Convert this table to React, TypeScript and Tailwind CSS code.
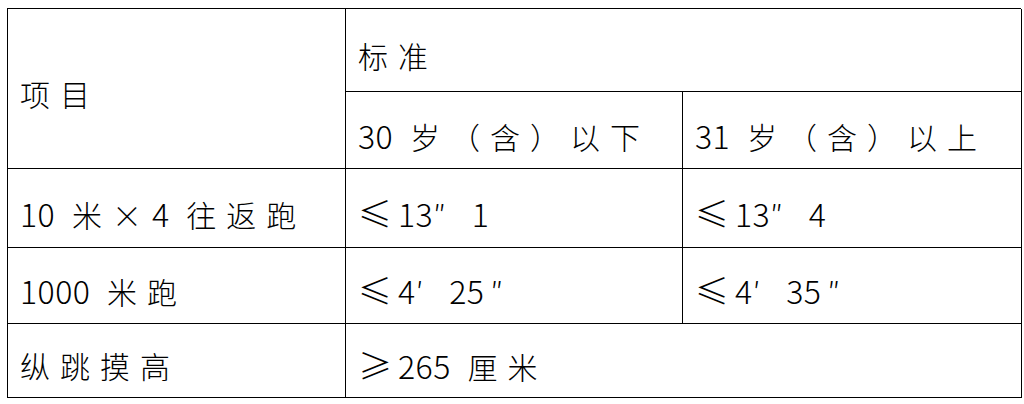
import type { ReactNode } from "react";

// CJK run: spaced on a wide character grid, like the Word table it comes from
function C({ children }: { children: ReactNode }) {
  return <span className="text-[30px] tracking-[10px]">{children}</span>;
}

// digits and primes
function L({ children }: { children: ReactNode }) {
  return <span className="text-[32px] tracking-[0.5px]">{children}</span>;
}

// ≤ / ≥
function M({ children }: { children: ReactNode }) {
  return <span className="mr-[6px] text-[34px]">{children}</span>;
}

function Cell({ className = "", children }: { className?: string; children: ReactNode }) {
  return (
    <div
      className={`flex items-center whitespace-pre border-r border-b border-black pt-[9px] pl-[12px] leading-none text-black ${className}`}
    >
      <span>{children}</span>
    </div>
  );
}

// e.g. ⩽13″ 1 — the prime sits on a full-width cell before the tenth digit
function Time({ lead, mark, tail, tailMark }: { lead: string; mark: string; tail: string; tailMark?: string }) {
  return (
    <>
      <M>≤</M>
      <L>{lead}</L>
      <span className="mr-[26px] text-[30px]">{mark}</span>
      <L>{tail}</L>
      {tailMark && <span className="ml-[6px] text-[30px]">{tailMark}</span>}
    </>
  );
}

export default function App() {
  return (
    <div className="h-[404px] w-[1024px] bg-white pt-[8px] pl-[7px] [font-family:Noto_Sans_CJK_SC,sans-serif] font-light">
      <div className="grid w-[1014px] grid-cols-[338px_337px_339px] grid-rows-[83px_77px_79px_76px_74px] border-t border-l border-black">
        <Cell className="row-span-2">
          <C>项目</C>
        </Cell>
        <Cell className="col-span-2">
          <C>标准</C>
        </Cell>
        <Cell>
          <L>30</L>
          <C> 岁（含）以下</C>
        </Cell>
        <Cell>
          <L>31</L>
          <C> 岁（含）以上</C>
        </Cell>

        <Cell>
          <L>10</L>
          <C> 米×</C>
          <L>4</L>
          <C> 往返跑</C>
        </Cell>
        <Cell>
          <Time lead="13" mark="″" tail="1" />
        </Cell>
        <Cell>
          <Time lead="13" mark="″" tail="4" />
        </Cell>

        <Cell>
          <L>1000</L>
          <C> 米跑</C>
        </Cell>
        <Cell>
          <Time lead="4" mark="′" tail="25" tailMark="″" />
        </Cell>
        <Cell>
          <Time lead="4" mark="′" tail="35" tailMark="″" />
        </Cell>

        <Cell>
          <C>纵跳摸高</C>
        </Cell>
        <Cell className="col-span-2">
          <M>≥</M>
          <L>265</L>
          <C> 厘米</C>
        </Cell>
      </div>
    </div>
  );
}
